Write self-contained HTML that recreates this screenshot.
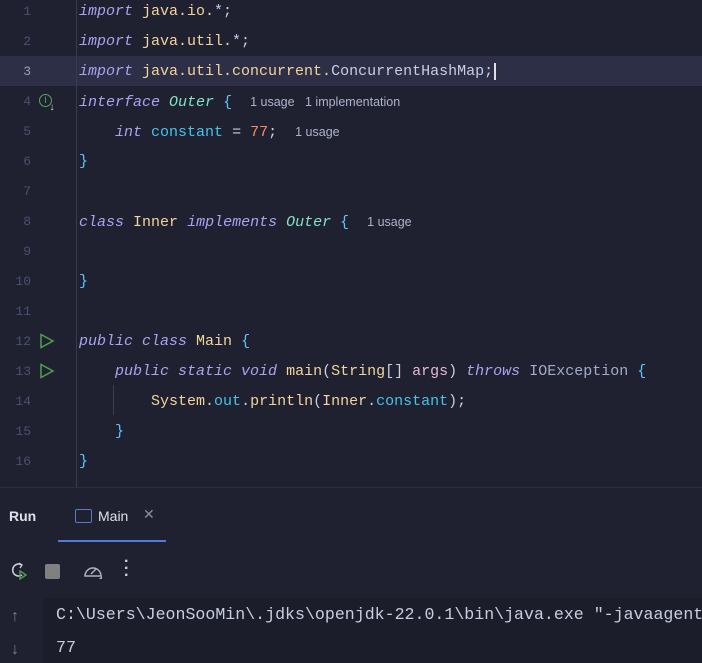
<!DOCTYPE html>
<html><head><style>
body{margin:0;width:702px;height:662px;overflow:hidden;background:#1f2130;font-family:"Liberation Mono",monospace;}
#ed{position:absolute;left:0;top:0;width:702px;height:487px;background:#1f2130;}
.ln{position:absolute;left:0;width:702px;height:30px;line-height:24px;}
.num{position:absolute;left:0;width:31px;text-align:right;color:#4a5070;font-size:13px;}
.code{position:absolute;left:79px;font-size:15px;color:#c8cde8;white-space:pre;}
.k{color:#a8a4f0;font-style:italic}
.y{color:#f2d49d}
.t{color:#7fe3c4;font-style:italic}
.c{color:#46c3ea}
.o{color:#ff8a5c}
.b{color:#5ec4ff}
.p{color:#e8b5d8}
.g{color:#a4aacb}
.h{font-family:"Liberation Sans",sans-serif;font-size:12.5px;color:#aeb3cc;font-style:normal}
#gl{position:absolute;left:76px;top:0;width:1px;height:487px;background:#363a52}
#pn{position:absolute;left:0;top:487px;width:702px;height:175px;background:#1f2130;border-top:1px solid #2a2d40}
#con{position:absolute;left:43px;top:597px;width:659px;height:65px;background:#1b1d2a}
</style></head><body>
<div id="ed">
<div class="ln" style="top:56px;background:#2c2f45"></div>
<div id="gl"></div>
<div class="ln" style="top:0"><span class="num">1</span><span class="code"><span class="k">import</span> <span class="y">java.io.</span>*;</span></div>
<div class="ln" style="top:30px"><span class="num">2</span><span class="code"><span class="k">import</span> <span class="y">java.util.</span>*;</span></div>
<div class="ln" style="top:60px"><span class="num" style="color:#9aa0c0">3</span><span class="code"><span class="k">import</span> <span class="y">java.util.concurrent.</span>ConcurrentHashMap;<span style="border-left:2px solid #e0e0e0;margin-left:1px"></span></span></div>
<div class="ln" style="top:90px"><span class="num">4</span><span style="position:absolute;left:39px;top:4px;width:11px;height:11px;border:1.5px solid #5aa45a;border-radius:50%;color:#5aa45a;font-size:9px;line-height:11px;text-align:center;font-family:'Liberation Sans'">I</span><span style="position:absolute;left:49px;top:7px;color:#ddd;font-size:10px">↓</span><span class="code"><span class="k">interface</span> <span class="t">Outer</span> <span class="b">{</span>  <span class="h">1 usage   1 implementation</span></span></div>
<div class="ln" style="top:120px"><span class="num">5</span><span class="code">    <span class="k">int</span> <span class="c">constant</span> = <span class="o">77</span>;  <span class="h">1 usage</span></span></div>
<div class="ln" style="top:150px"><span class="num">6</span><span class="code"><span class="b">}</span></span></div>
<div class="ln" style="top:180px"><span class="num">7</span></div>
<div class="ln" style="top:210px"><span class="num">8</span><span class="code"><span class="k">class</span> <span class="y">Inner</span> <span class="k">implements</span> <span class="t">Outer</span> <span class="b">{</span>  <span class="h">1 usage</span></span></div>
<div class="ln" style="top:240px"><span class="num">9</span></div>
<div class="ln" style="top:270px"><span class="num">10</span><span class="code"><span class="b">}</span></span></div>
<div class="ln" style="top:300px"><span class="num">11</span></div>
<div class="ln" style="top:330px"><span class="num">12</span><svg style="position:absolute;left:39px;top:3px" width="16" height="16"><path d="M2 1.5 L14 8 L2 14.5 Z" fill="none" stroke="#4fa04f" stroke-width="1.5"/></svg><span class="code"><span class="k">public class</span> <span class="y">Main</span> <span class="b">{</span></span></div>
<div class="ln" style="top:360px"><span class="num">13</span><svg style="position:absolute;left:39px;top:3px" width="16" height="16"><path d="M2 1.5 L14 8 L2 14.5 Z" fill="none" stroke="#4fa04f" stroke-width="1.5"/></svg><span class="code">    <span class="k">public static void</span> <span class="y">main</span>(<span class="y">String</span>[] <span class="p">args</span>) <span class="k">throws</span> <span class="g">IOException</span> <span class="b">{</span></span></div>
<div class="ln" style="top:390px"><span style="position:absolute;left:113px;top:-5px;width:1px;height:30px;background:#3a3f5a"></span><span class="num">14</span><span class="code">        <span class="y">System</span>.<span class="c">out</span>.<span class="y">println</span>(<span class="y">Inner</span>.<span class="c">constant</span>);</span></div>
<div class="ln" style="top:420px"><span class="num">15</span><span class="code">    <span class="b">}</span></span></div>
<div class="ln" style="top:450px"><span class="num">16</span><span class="code"><span class="b">}</span></span></div>
</div>
<div id="pn">
<div style="position:absolute;left:9px;top:20px;font:bold 14px 'Liberation Sans',sans-serif;color:#dfe1ea">Run</div>
<div style="position:absolute;left:75px;top:21px;width:15px;height:12px;border:1.5px solid #5a78c8;border-radius:2px"></div>
<div style="position:absolute;left:98px;top:20px;font:14px 'Liberation Sans',sans-serif;color:#dfe1ea">Main</div>
<div style="position:absolute;left:143px;top:18px;font:14px 'Liberation Sans',sans-serif;color:#8a8ea4">✕</div>
<div style="position:absolute;left:58px;top:52px;width:108px;height:2px;background:#4e7cd8"></div>
<svg style="position:absolute;left:9px;top:73px" width="20" height="20"><path d="M13 4 A6 6 0 1 0 13 14" fill="none" stroke="#cfd2de" stroke-width="1.5"/><path d="M10 2 L13 4 L11 7" fill="none" stroke="#cfd2de" stroke-width="1.3"/><path d="M11 10 L17 14 L11 18 Z" fill="none" stroke="#4fa04f" stroke-width="1.4"/></svg>
<div style="position:absolute;left:45px;top:76px;width:15px;height:15px;background:#808080;border-radius:2px"></div>
<svg style="position:absolute;left:82px;top:73px" width="22" height="20"><path d="M3 15 A8 8 0 1 1 19 15 Z" fill="none" stroke="#aeb1c0" stroke-width="1.5"/><path d="M9 13 L14 8" stroke="#aeb1c0" stroke-width="1.5"/><path d="M20 18 L17 18 L20 15Z" fill="#aeb1c0"/></svg>
<div style="position:absolute;left:124px;top:70px;font:bold 16px 'Liberation Sans';color:#cfd2de;line-height:7px;width:4px">·<br>·<br>·</div>
<div id="con" style="top:110px"></div>
<div style="position:absolute;left:11px;top:120px;color:#7a7e94;font:16px 'Liberation Sans'">↑</div>
<div style="position:absolute;left:11px;top:153px;color:#7a7e94;font:16px 'Liberation Sans'">↓</div>
<div style="position:absolute;left:56px;top:117px;font-size:16.6px;color:#c8cde0;white-space:pre">C:\Users\JeonSooMin\.jdks\openjdk-22.0.1\bin\java.exe "-javaagent</div>
<div style="position:absolute;left:56px;top:150px;font-size:16.6px;color:#c8cde0">77</div>
</div>
</body></html>
